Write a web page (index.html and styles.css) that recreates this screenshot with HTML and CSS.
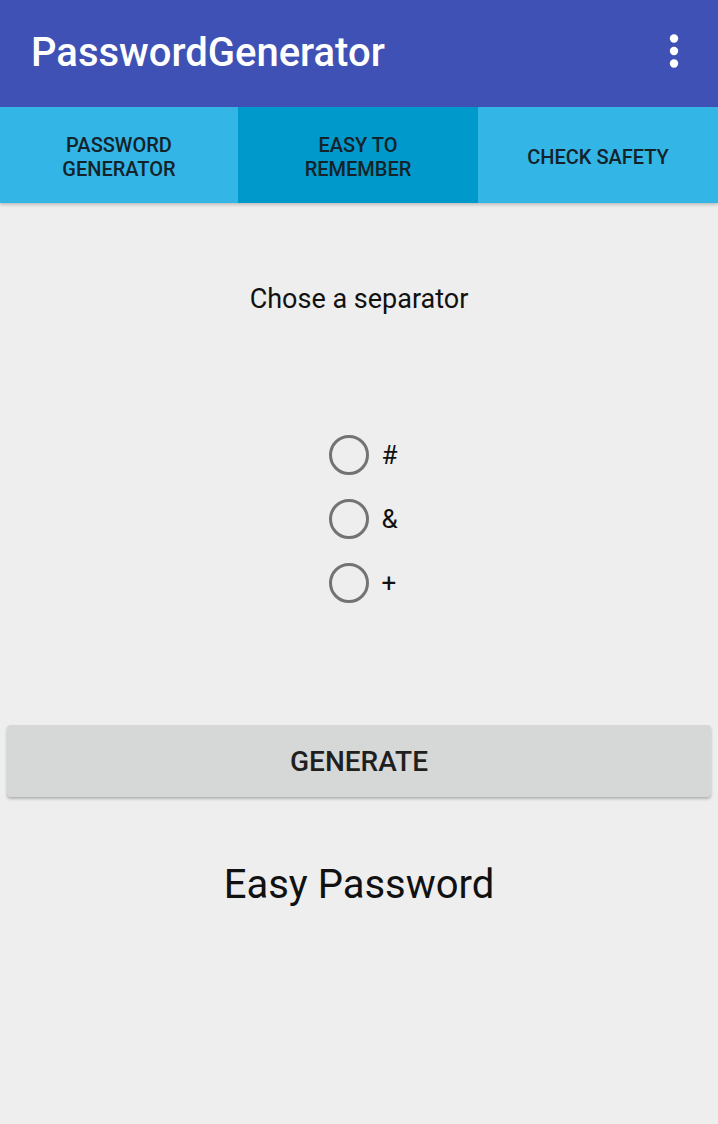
FILE: index.html
```html
<!DOCTYPE html>
<html>
<head>
<meta charset="utf-8">
<link rel="stylesheet" href="styles.css">
</head>
<body>
<div class="app">
  <header class="appbar">
    <h1 class="title">PasswordGenerator</h1>
    <button class="menu" aria-label="More options">
      <svg width="12" height="36" viewBox="0 0 12 36"><circle cx="6" cy="5.5" r="4.2" fill="#fff"/><circle cx="6" cy="18" r="4.2" fill="#fff"/><circle cx="6" cy="30.5" r="4.2" fill="#fff"/></svg>
    </button>
  </header>
  <nav class="tabs">
    <div class="tab">PASSWORD<br>GENERATOR</div>
    <div class="tab active">EASY TO<br>REMEMBER</div>
    <div class="tab">CHECK SAFETY</div>
  </nav>
  <main class="content">
    <p class="prompt">Chose a separator</p>
    <div class="radios">
      <label class="radio"><span class="circle"></span><span class="lbl">#</span></label>
      <label class="radio"><span class="circle"></span><span class="lbl">&amp;</span></label>
      <label class="radio"><span class="circle"></span><span class="lbl">+</span></label>
    </div>
    <button class="generate">GENERATE</button>
    <p class="result">Easy Password</p>
  </main>
</div>
</body>
</html>
```
FILE: styles.css
```css
* { box-sizing: border-box; }
html, body { margin: 0; padding: 0; }
body {
  width: 718px;
  height: 1124px;
  background: #eeeeee;
  font-family: Roboto, "Noto Sans", sans-serif;
  overflow: hidden;
}
.appbar {
  height: 107px;
  background: #3f51b5;
  display: flex;
  align-items: center;
  justify-content: space-between;
  padding: 0 38px 0 31px;
}
.title {
  margin: 0;
  color: #fff;
  font-size: 40px;
  font-weight: 500;
  letter-spacing: 0;
  position: relative;
  top: -1px;
}
.menu {
  background: none;
  border: 0;
  padding: 0;
  display: flex;
  position: relative;
  top: -3px;
}
.tabs {
  display: grid;
  grid-template-columns: 238px 240px 240px;
  height: 96px;
  background: #33b5e5;
  box-shadow: 0 2px 3px rgba(0,0,0,0.2);
  position: relative;
}
.tab {
  display: flex;
  align-items: center;
  justify-content: center;
  text-align: center;
  font-size: 20px;
  font-weight: 500;
  color: #14232a;
  line-height: 24px;
  padding-top: 4px;
}
.tab.active { background: #0099cc; }
.content {
  display: flex;
  flex-direction: column;
  align-items: center;
}
.prompt {
  margin: 80px 0 0;
  font-size: 27px;
  line-height: 32px;
  color: #111;
}
.radios {
  margin-top: 120px;
  display: flex;
  flex-direction: column;
  gap: 24px;
  margin-left: 12px;
}
.radio {
  display: flex;
  align-items: center;
  height: 40px;
}
.circle {
  width: 40px;
  height: 40px;
  border: 3px solid #737373;
  border-radius: 50%;
}
.lbl {
  margin-left: 13px;
  font-size: 26px;
  color: #111;
  width: 20px;
}
.generate {
  margin-top: 122px;
  width: 704px;
  height: 72px;
  background: #d6d7d7;
  border: 0;
  border-radius: 4px;
  box-shadow: 0 2px 3px rgba(0,0,0,0.25);
  font-family: Roboto, "Noto Sans", sans-serif;
  font-size: 28px;
  font-weight: 500;
  color: #1f1f1f;
}
.result {
  margin: 62px 0 0;
  font-size: 40px;
  color: #111;
  line-height: 52px;
}
```
